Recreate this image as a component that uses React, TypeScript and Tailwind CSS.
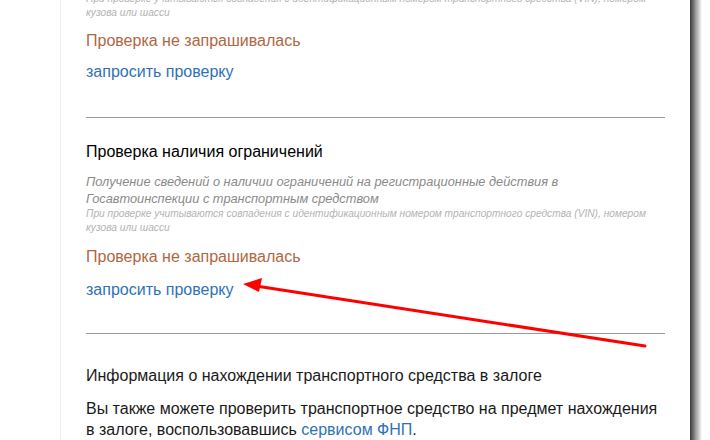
export default function App() {
  return (
    <div className="relative h-[440px] w-[710px] overflow-hidden bg-white font-['Liberation_Sans',Arial,sans-serif]">
      <div className="flex h-full">
        <div className="w-[60px]" />
        <div className="w-[630px] border-l border-[#ededed] px-[25px]">
          <div className="-mt-[8px]">
            <p className="text-[10.2px] leading-[14px] italic text-[#b3b3b3]">
              При проверке учитываются совпадения с идентификационным номером транспортного средства (VIN), номером кузова или шасси
            </p>
            <p className="mt-[11px] text-[16px] leading-[20px] text-[#b0673f]">Проверка не запрашивалась</p>
            <a className="mt-[11px] block text-[16px] leading-[20px] text-[#2f72b3]">запросить проверку</a>
            <div className="mt-[35px] h-px bg-[#9a9a9a]" />

            <h3 className="mt-[24px] text-[16px] leading-[20px] text-black">Проверка наличия ограничений</h3>
            <p className="mt-[11px] text-[12.8px] leading-[17px] italic text-[#8a8a8a]">
              Получение сведений о наличии ограничений на регистрационные действия в Госавтоинспекции с транспортным средством
            </p>
            <p className="text-[10.2px] leading-[14px] italic text-[#b3b3b3]">
              При проверке учитываются совпадения с идентификационным номером транспортного средства (VIN), номером кузова или шасси
            </p>
            <p className="mt-[12px] text-[16px] leading-[20px] text-[#b0673f]">Проверка не запрашивалась</p>
            <a className="mt-[13px] block text-[16px] leading-[20px] text-[#2f72b3]">запросить проверку</a>
            <div className="mt-[33px] h-px bg-[#9a9a9a]" />

            <h3 className="mt-[32px] text-[16px] leading-[20px] text-[#1a1a1a]">
              Информация о нахождении транспортного средства в залоге
            </h3>
            <p className="mt-[12px] text-[16px] leading-[21px] text-[#1a1a1a]">
              Вы также можете проверить транспортное средство на предмет нахождения в залоге, воспользовавшись{" "}
              <a className="text-[#2f72b3]">сервисом ФНП</a>.
            </p>
          </div>
        </div>
        <div className="w-[12px] bg-gradient-to-r from-[#3a3a3a] via-[#a0a0a0] to-white" />
      </div>

      <svg className="pointer-events-none absolute left-0 top-0" width="710" height="440" viewBox="0 0 710 440">
        <line x1="645" y1="346" x2="256" y2="286" stroke="#ff0000" strokeWidth="3" strokeLinecap="round" />
        <polygon points="243,284 262,278 259,292" fill="#ff0000" />
      </svg>
    </div>
  );
}
